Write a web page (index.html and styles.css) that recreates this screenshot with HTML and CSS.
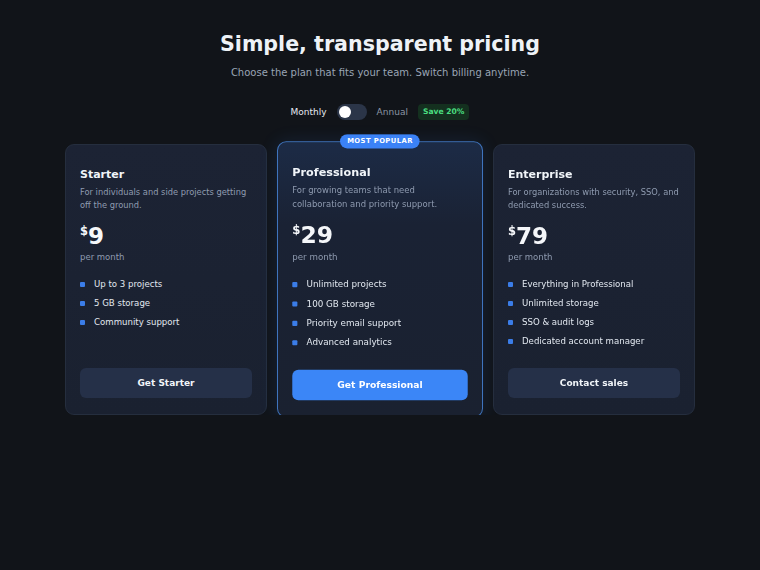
FILE: index.html
```html
<!DOCTYPE html>
<html lang="en">
<head>
    <meta charset="UTF-8">
    <meta name="viewport" content="width=device-width, initial-scale=1.0">
    <title>Pricing</title>
    <link rel="stylesheet" href="styles.css">
</head>
<body>

<div class="page">
    <h1>Simple, transparent pricing</h1>
    <p class="subtitle">Choose the plan that fits your team. Switch billing anytime.</p>

    <!-- Billing switch -->
    <div class="billing">
        <span class="billing-label active">Monthly</span>
        <span class="toggle"><span class="knob"></span></span>
        <span class="billing-label">Annual</span>
        <span class="save">Save 20%</span>
    </div>

    <div class="plans">
        <div class="plan">
            <h3>Starter</h3>
            <p class="plan-desc">For individuals and side projects getting off the ground.</p>
            <div class="price"><span class="currency">$</span>9</div>
            <div class="period">per month</div>
            <ul class="features">
                <li>Up to 3 projects</li>
                <li>5 GB storage</li>
                <li>Community support</li>
            </ul>
            <button class="plan-btn">Get Starter</button>
        </div>

        <div class="plan featured">
            <span class="popular">MOST POPULAR</span>
            <h3>Professional</h3>
            <p class="plan-desc">For growing teams that need collaboration and priority support.</p>
            <div class="price"><span class="currency">$</span>29</div>
            <div class="period">per month</div>
            <ul class="features">
                <li>Unlimited projects</li>
                <li>100 GB storage</li>
                <li>Priority email support</li>
                <li>Advanced analytics</li>
            </ul>
            <button class="plan-btn primary">Get Professional</button>
        </div>

        <div class="plan">
            <h3>Enterprise</h3>
            <p class="plan-desc">For organizations with security, SSO, and dedicated success.</p>
            <div class="price"><span class="currency">$</span>79</div>
            <div class="period">per month</div>
            <ul class="features">
                <li>Everything in Professional</li>
                <li>Unlimited storage</li>
                <li>SSO &amp; audit logs</li>
                <li>Dedicated account manager</li>
            </ul>
            <button class="plan-btn">Contact sales</button>
        </div>
    </div>
</div>

</body>
</html>
```

FILE: styles.css
```css
/* Base */
body, h1, h3, p, ul, li, button {
    font-family: 'DejaVu Sans', sans-serif;
}

body {
    background-color: #111419;
    color: #f1f5f9;
    margin: 0;
    padding: 0;
}

.page {
    max-width: 630px;
    margin: 0 auto;
    padding-top: 30px;
}

h1 {
    text-align: center;
    font-size: 20.6px;
    line-height: 28px;
    font-weight: 700;
    margin: 0;
    color: #eef2f7;
}

.subtitle {
    text-align: center;
    font-size: 10px;
    line-height: 14px;
    color: #9aa5b5;
    margin: 8px 0 0;
}

/* Billing switch */
.billing {
    display: flex;
    justify-content: center;
    align-items: center;
    gap: 10px;
    margin-top: 24px;
    height: 16px;
}

.billing-label {
    font-size: 9px;
    color: #8b95a5;
}

.billing-label.active {
    color: #e5e9f0;
}

.toggle {
    width: 30px;
    height: 16px;
    border-radius: 8px;
    background-color: #2b3548;
    display: flex;
    align-items: center;
    padding: 0 2px;
    box-sizing: border-box;
}

.knob {
    width: 12px;
    height: 12px;
    border-radius: 50%;
    background-color: #fff;
}

.save {
    font-size: 7.6px;
    font-weight: 700;
    line-height: 16px;
    color: #4ade80;
    background-color: #14301f;
    border-radius: 4px;
    padding: 0 5px;
}

/* Plans grid */
.plans {
    display: grid;
    grid-template-columns: repeat(3, 1fr);
    gap: 12px;
    margin-top: 24px;
}

.plan {
    position: relative;
    display: flex;
    flex-direction: column;
    background: linear-gradient(180deg, #1c2334, #1a2130);
    border: 1px solid #252e3e;
    border-radius: 9px;
    padding: 22px 14px 16px;
}

.plan.featured {
    transform: scale(1.02);
    border-color: #3f74bd;
    background: linear-gradient(180deg, #1c2b46 0%, #1a2234 30%, #1a2130 100%);
    box-shadow: 0 0 18px rgba(59, 130, 246, 0.12);
}

.popular {
    position: absolute;
    top: -8px;
    left: 50%;
    transform: translateX(-50%);
    background-color: #3b82f6;
    color: #fff;
    font-size: 6.7px;
    font-weight: 700;
    letter-spacing: 0.4px;
    line-height: 14px;
    padding: 0 7px;
    border-radius: 7px;
    white-space: nowrap;
}

.plan h3 {
    font-size: 11px;
    line-height: 16px;
    margin: 0;
    color: #f1f5f9;
}

.plan-desc {
    font-size: 8.3px;
    line-height: 13px;
    color: #8f9bb0;
    margin: 3px 0 0;
}

.price {
    font-size: 23px;
    line-height: 28px;
    font-weight: 700;
    margin-top: 10px;
    color: #f5f7fa;
}

.currency {
    font-size: 11.5px;
    vertical-align: top;
    line-height: 18px;
}

.period {
    font-size: 8.5px;
    line-height: 14px;
    color: #8f9bb0;
    margin-top: 0;
}

.features {
    list-style: none;
    padding: 0;
    margin: 13px 0 20px;
    display: flex;
    flex-direction: column;
    gap: 5px;
}

.features li {
    font-size: 8.6px;
    line-height: 14px;
    color: #e2e8f0;
    display: flex;
    align-items: center;
    gap: 9px;
}

.features li::before {
    content: "";
    width: 5px;
    height: 5px;
    border-radius: 1px;
    background-color: #3b7de8;
    flex-shrink: 0;
}

.plan-btn {
    margin-top: auto;
    height: 30px;
    border: none;
    border-radius: 6px;
    background-color: #253048;
    color: #f1f5f9;
    font-size: 9px;
    font-weight: 700;
    cursor: pointer;
}

.plan-btn.primary {
    background-color: #3b86f7;
    color: #fff;
}
```
